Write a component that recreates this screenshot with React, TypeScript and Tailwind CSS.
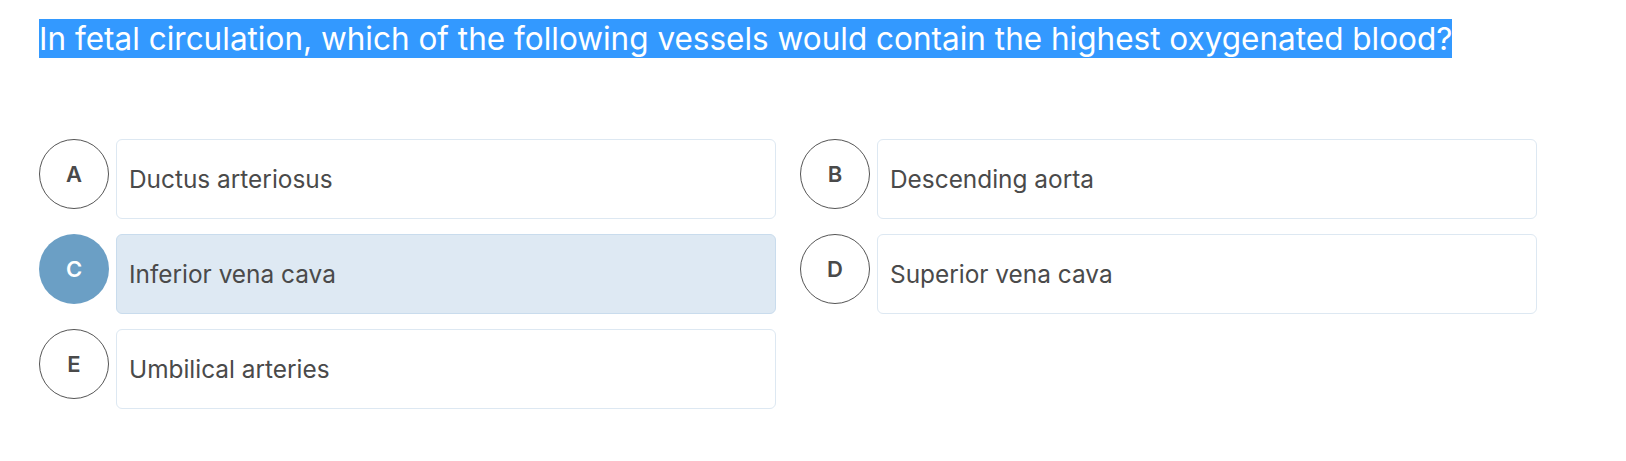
import React from 'react';

type Option = { letter: string; text: string; selected?: boolean };

const OPTIONS: Option[] = [
  { letter: 'A', text: 'Ductus arteriosus' },
  { letter: 'B', text: 'Descending aorta' },
  { letter: 'C', text: 'Inferior vena cava', selected: true },
  { letter: 'D', text: 'Superior vena cava' },
  { letter: 'E', text: 'Umbilical arteries' },
];

function OptionRow({ letter, text, selected }: Option) {
  return (
    <div className="flex items-start gap-[7px]">
      <div
        className={
          selected
            ? 'w-[70px] h-[70px] shrink-0 rounded-full bg-[#6b9fc5] text-white flex items-center justify-center text-[22px] font-semibold'
            : 'w-[70px] h-[70px] shrink-0 rounded-full border border-[#555] bg-white text-[#4a4a4a] flex items-center justify-center text-[22px] font-semibold'
        }
      >
        {letter}
      </div>
      <div
        className={
          selected
            ? 'flex-1 h-[80px] rounded-[6px] border border-[#c9dced] bg-[#dee9f3] flex items-center px-[12px] text-[24.4px] text-[#4a4a4a]'
            : 'flex-1 h-[80px] rounded-[6px] border border-[#dde8f2] bg-white flex items-center px-[12px] text-[24.4px] text-[#4a4a4a]'
        }
      >
        {text}
      </div>
    </div>
  );
}

export default function App() {
  return (
    <div className="w-[1626px] h-[461px] bg-white pl-[39px] pt-[18px]" style={{ fontFamily: 'Inter, "Noto Sans", sans-serif' }}>
      <h1 className="text-[31.5px] leading-[41px] font-normal">
        <span className="bg-[#3399ff] text-white">
          In fetal circulation, which of the following vessels would contain the highest oxygenated blood?
        </span>
      </h1>
      <div className="mt-[80px] grid grid-cols-[737px_737px] gap-x-[24px] gap-y-[15px]">
        {OPTIONS.map((o) => (
          <OptionRow key={o.letter} {...o} />
        ))}
      </div>
    </div>
  );
}
